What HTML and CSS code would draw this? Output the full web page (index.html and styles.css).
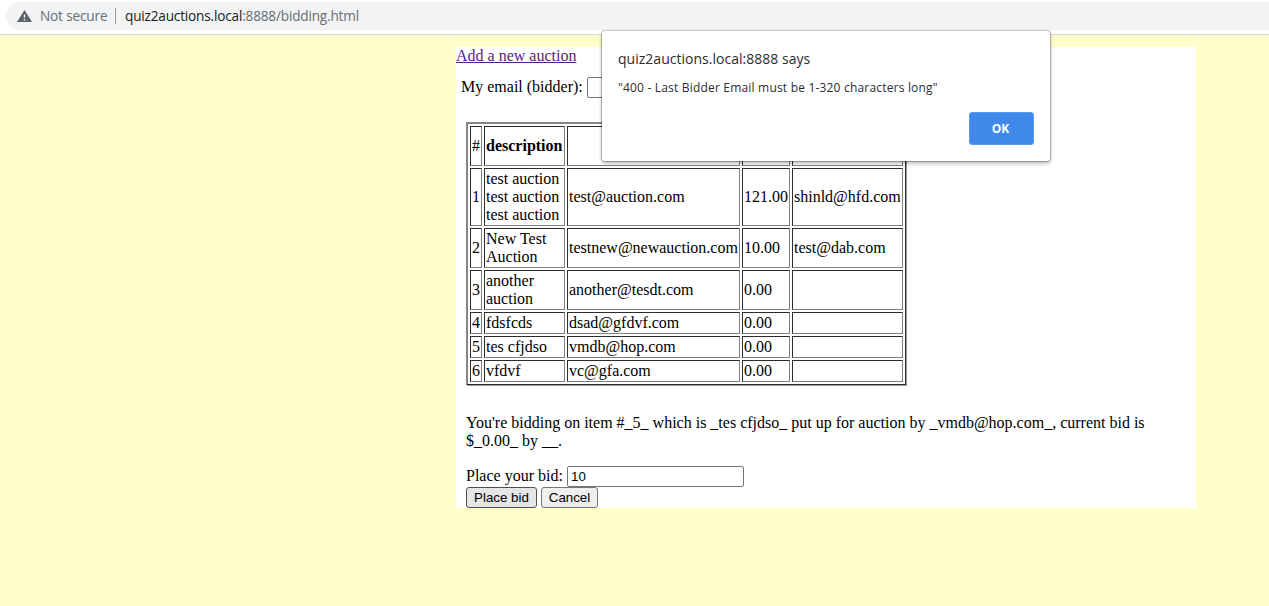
FILE: index.html
```html
<!DOCTYPE html>
<html lang="en">
<head>
<meta charset="utf-8">
<title>Bidding</title>
<link rel="stylesheet" href="styles.css">
</head>
<body>
<header class="toolbar">
  <div class="address">
    <svg class="warning" width="15" height="13" viewBox="0 0 15 13"><path fill="#5f6368" fill-rule="evenodd" d="M7.5 0 15 12H0ZM6.8 4.4v3.4h1.4V4.4ZM6.8 9V10.4h1.4V9Z"/></svg>
    <span class="security">Not secure</span>
    <span class="divider"></span>
    <span class="url"><span class="host">quiz2auctions.local</span>:8888/bidding.html</span>
  </div>
</header>
<main class="container">
  <div class="nav"><a class="link" href="#">Add a new auction</a></div>
  <div class="email-row"><label class="email-label" for="email">My email (bidder):</label><input class="field" id="email" type="text"></div>
  <table class="auctions">
    <colgroup><col class="c-num"><col class="c-desc"><col class="c-seller"><col class="c-bid"><col class="c-bidder"></colgroup>
    <tr class="head"><td>#</td><th>description</th><th></th><th></th><th></th></tr>
    <tr class="three"><td>1</td><td>test auction<br>test auction<br>test auction</td><td>test@auction.com</td><td>121.00</td><td>shinld@hfd.com</td></tr>
    <tr class="two"><td>2</td><td>New Test<br>Auction</td><td>testnew@newauction.com</td><td>10.00</td><td>test@dab.com</td></tr>
    <tr class="two"><td>3</td><td>another<br>auction</td><td>another@tesdt.com</td><td>0.00</td><td></td></tr>
    <tr class="one"><td>4</td><td>fdsfcds</td><td>dsad@gfdvf.com</td><td>0.00</td><td></td></tr>
    <tr class="one"><td>5</td><td>tes cfjdso</td><td>vmdb@hop.com</td><td>0.00</td><td></td></tr>
    <tr class="one"><td>6</td><td>vfdvf</td><td>vc@gfa.com</td><td>0.00</td><td></td></tr>
  </table>
  <p class="status">You're bidding on item #_5_ which is _tes cfjdso_ put up for auction by _vmdb@hop.com_, current bid is<br>$_0.00_ by __.</p>
  <div class="bid-row"><label class="bid-label" for="bid">Place your bid:</label><input class="field" id="bid" type="text" value="10"></div>
  <div class="actions"><button class="btn btn-hover">Place bid</button><button class="btn btn-cancel">Cancel</button></div>
</main>
<div class="dialog" role="alertdialog">
  <div class="dialog-title">quiz2auctions.local:8888 says</div>
  <div class="dialog-message">"400 - Last Bidder Email must be 1-320 characters long"</div>
  <div class="dialog-actions"><button class="ok">OK</button></div>
</div>
</body>
</html>
```
FILE: styles.css
```css
* { box-sizing: border-box; }
body {
  margin: 0;
  height: 606px;
  overflow: hidden;
  background: #ffffcc;
  color: #000;
  font: 16px/18px "Liberation Serif", "Times New Roman", serif;
}
.toolbar {
  height: 35px;
  padding: 2px 0 0 6px;
  background: #fff;
  border-bottom: 1px solid #d9dbd5;
}
.address {
  display: flex;
  align-items: center;
  height: 28px;
  padding-left: 11px;
  background: #f1f3f4;
  border-radius: 14px 0 0 14px;
  font: 13.6px/28px "Open Sans", "Noto Sans", sans-serif;
  color: #6a6d71;
  white-space: nowrap;
}
.security { width: 67px; margin-left: 8px; letter-spacing: -0.15px; }
.divider { width: 1px; height: 16px; margin: 0 9px 0 8px; background: #9a9da1; }
.url { letter-spacing: -0.18px; }
.host { color: #202124; }
.container {
  width: 740px;
  height: 461px;
  margin: 12px 0 0 456px;
  background: #fff;
}
.nav { height: 30px; }
.link { color: #551a8b; text-decoration: underline; }
.email-row { display: flex; align-items: center; height: 21px; padding-left: 5px; }
.email-label, .bid-label { padding-bottom: 2px; white-space: nowrap; }
.email-label { width: 126px; }
.field {
  width: 177px;
  height: 21px;
  margin: 0;
  padding: 1px 3px;
  border: 1px solid #767676;
  border-radius: 2px;
  background: #fff;
  color: #000;
  font: 13.333px "Liberation Sans", Arial, sans-serif;
}
.auctions {
  table-layout: fixed;
  width: 440px;
  margin: 24px 0 0 10px;
  border: solid;
  border-width: 2px 1px 1px 2px;
  border-color: #868686 #2c2c2c #2c2c2c #868686;
  box-shadow: 1px 1px 0 #9a9a9a;
  border-collapse: separate;
  border-spacing: 2px;
}
.c-num { width: 12px; }
.c-desc { width: 81px; }
.c-seller { width: 173px; }
.c-bid { width: 48px; }
.c-bidder { width: 111px; }
.auctions td, .auctions th {
  padding: 1px;
  border: 1px solid;
  border-color: #2c2c2c #808080 #808080 #2c2c2c;
  white-space: nowrap;
  vertical-align: middle;
  text-align: left;
}
.head { height: 40px; }
.three { height: 58px; }
.two { height: 40px; }
.one { height: 22px; }
.status { margin: 29px 0 0 10px; white-space: nowrap; }
.bid-row { display: flex; align-items: center; height: 21px; margin: 16px 0 0 10px; }
.bid-label { width: 101px; }
.actions { display: flex; gap: 4px; padding-left: 10px; }
.btn {
  width: 71px;
  height: 21px;
  padding: 0;
  border: 1px solid #767676;
  border-radius: 3px;
  background: #efefef;
  color: #000;
  font: 13.333px "Liberation Sans", Arial, sans-serif;
}
.btn-hover { background: #e5e5e5; border-color: #4f4f4f; }
.btn-cancel { width: 57px; }
.dialog {
  position: absolute;
  top: 31px;
  left: 602px;
  width: 448px;
  height: 130px;
  padding: 17px 16px 16px;
  background: #fff;
  border-radius: 3px;
  box-shadow: 0 0 0 1px rgba(0,0,0,.2), 0 2px 4px rgba(0,0,0,.35);
  color: #2b2d30;
  font-family: "Open Sans", "Noto Sans", sans-serif;
  white-space: nowrap;
}
.dialog-title { font-size: 14px; line-height: 22px; letter-spacing: 0.02px; }
.dialog-message { margin-top: 9px; font-size: 12px; line-height: 18px; letter-spacing: 0.19px; }
.dialog-actions { display: flex; justify-content: flex-end; margin-top: 15px; }
.ok {
  width: 65px;
  height: 33px;
  padding: 0 2px 0 0;
  border: 1px solid #5a9bf0;
  border-radius: 3px;
  background: #4089eb;
  color: #fff;
  font: 700 12px "Open Sans", "Noto Sans", sans-serif;
}
```
